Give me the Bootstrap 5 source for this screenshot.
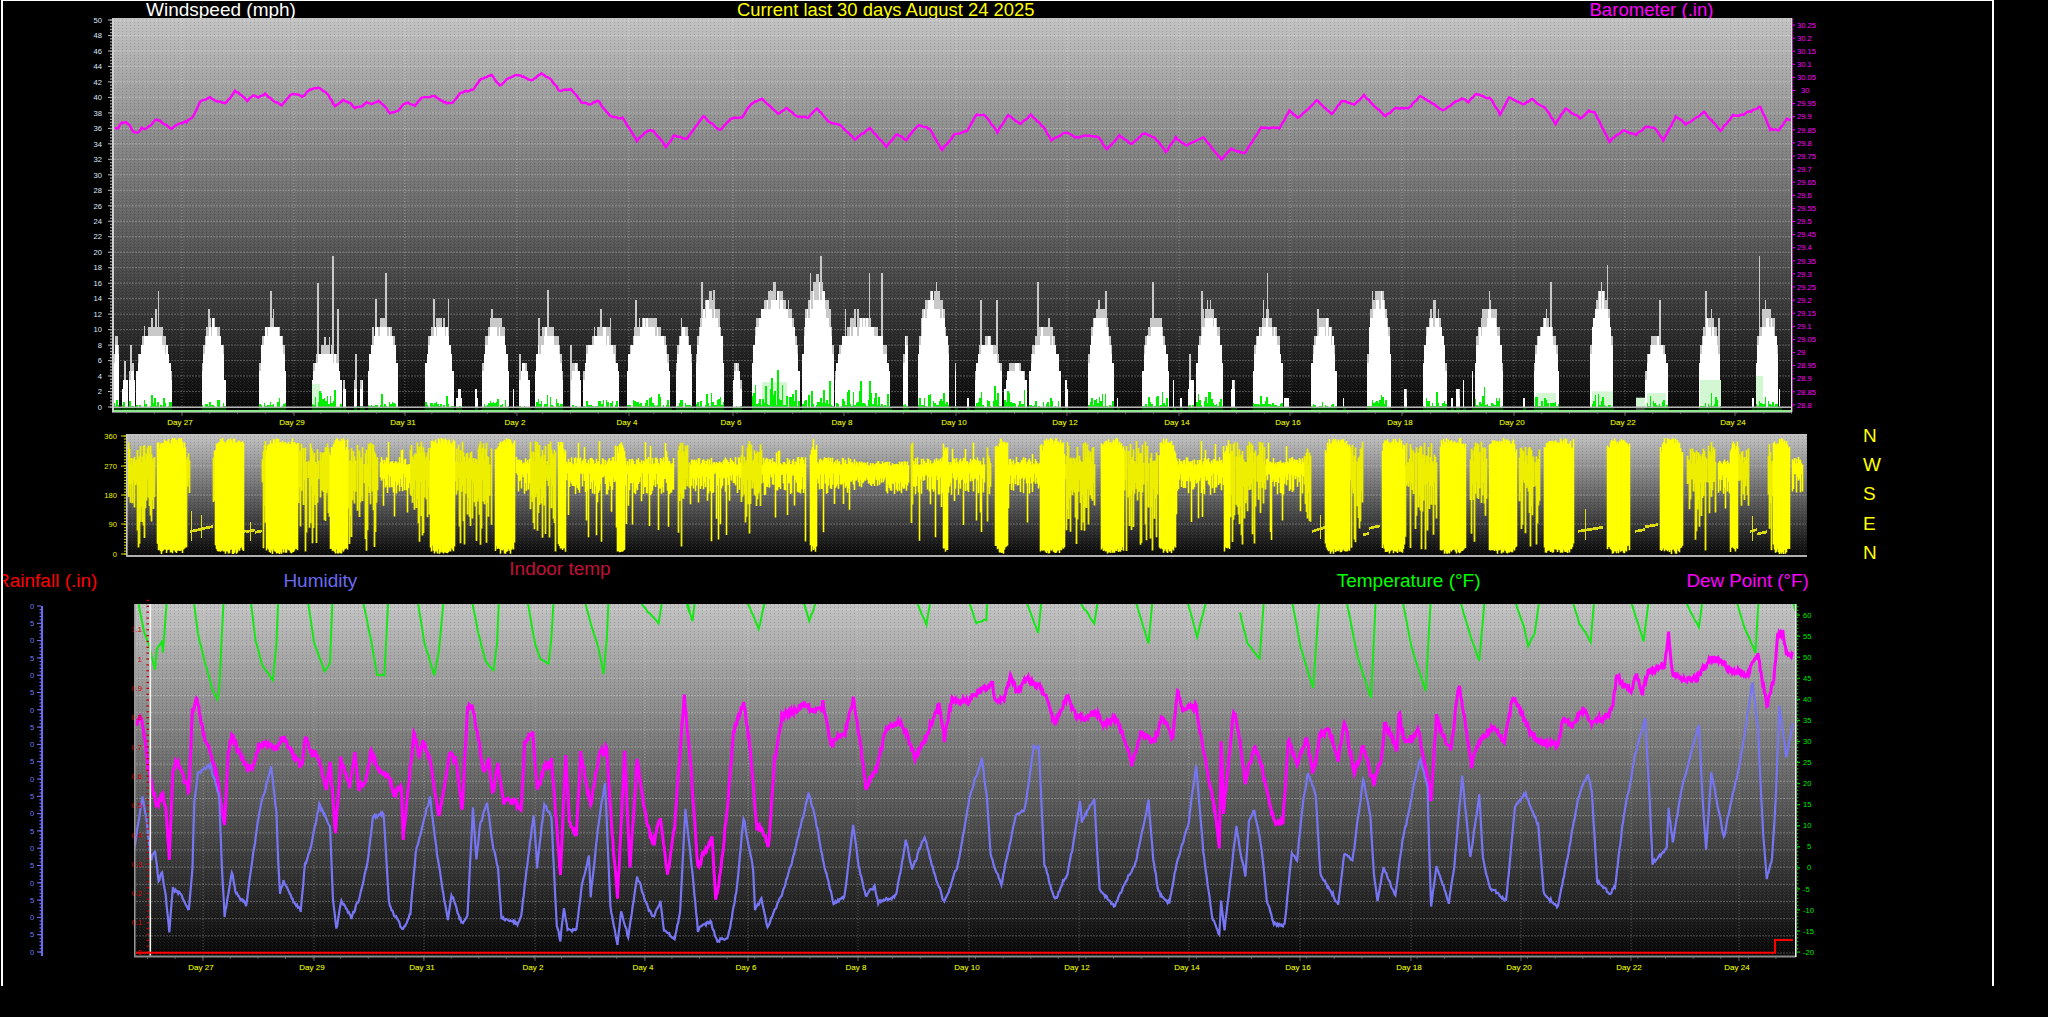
<!DOCTYPE html>
<html lang="en">
<head>
<meta charset="utf-8">
<title>Current last 30 days</title>
<link href="https://cdn.jsdelivr.net/npm/bootstrap@5.3.0/dist/css/bootstrap.min.css" rel="stylesheet">
<style>
html,body{background:#000;margin:0;overflow:hidden}
.wx-frame{margin-left:1px;width:1993px;height:986px;border:solid #fff;border-width:1px 2px 0 2px;font-family:"Liberation Sans",Arial,sans-serif}
.wx-frame svg{display:block;flex:none;overflow:visible;font-family:"Liberation Sans",Arial,sans-serif}
.wx-titles-top{height:17px;font-size:19px;line-height:17px}
.wx-titles-top span{white-space:nowrap}
.wx-titles-mid{height:47px;font-size:19px;line-height:22px}
.wx-titles-mid span{white-space:nowrap}
.wx-low{align-self:flex-end;margin-bottom:12px}
.t-wind{margin-left:143px;color:#fff}
.t-cur{margin-left:441px;color:#ffff00;font-size:18.4px}
.t-baro{margin-left:555px;color:#ff00ff;font-size:18.6px}
.t-rain{margin-left:-7px;color:#ff0000}
.t-hum{margin-left:186px;color:#6a6af0}
.t-ind{margin-left:152px;margin-top:1px;color:#c01038}
.t-temp{margin-left:726px;color:#00ff00}
.t-dew{margin-left:206px;color:#ff00ff;font-size:18.8px}
.wx-mid{height:127px}
.wx-compass{margin-top:-9px;margin-left:0;color:#ffff00;font-size:19px;line-height:29.2px}
.lb{font-size:7.6px}
.lb-w{fill:#dce8ff}
.lb-m{fill:#ff00ff}
.lb-y{fill:#f0f000}
.lb-g{fill:#00e800}
.lb-r{fill:#d80000}
.lb-b{fill:#7a7af5}
.lb-d{fill:#f6f600;stroke:#3a6a00;stroke-width:.25px;paint-order:stroke;font-size:8px}
</style>
</head>
<body class="bg-black">
<div class="wx-frame d-flex flex-column overflow-hidden bg-black">
  <div class="wx-titles-top d-flex">
    <span class="t-wind">Windspeed (mph)</span>
    <span class="t-cur">Current last 30 days August 24 2025</span>
    <span class="t-baro">Barometer (.in)</span>
  </div>
  <svg id="c1" width="1989" height="412" viewBox="3 18 1989 412"></svg>
  <div class="wx-mid d-flex align-items-start">
    <svg id="c2" width="1860" height="127" viewBox="3 430 1860 127"></svg>
    <div class="wx-compass d-flex flex-column">
      <span>N</span><span>W</span><span>S</span><span>E</span><span>N</span>
    </div>
  </div>
  <div class="wx-titles-mid d-flex overflow-hidden">
    <span class="t-rain wx-low">Rainfall (.in)</span>
    <span class="t-hum wx-low">Humidity</span>
    <span class="t-ind">Indoor temp</span>
    <span class="t-temp wx-low">Temperature (°F)</span>
    <span class="t-dew wx-low">Dew Point (°F)</span>
  </div>
  <svg id="c3" width="1989" height="381" viewBox="3 604 1989 381"></svg>
</div>
<script src="https://cdn.jsdelivr.net/npm/bootstrap@5.3.0/dist/js/bootstrap.bundle.min.js"></script>
<script>
function rng(a){return function(){a|=0;a=a+0x6D2B79F5|0;var t=Math.imul(a^a>>>15,1|a);t=t+Math.imul(t^t>>>7,61|t)^t;return((t^t>>>14)>>>0)/4294967296}}
var f1=function(v){return +v.toFixed(1)};
function defs(id){return '<linearGradient id="g'+id+'" x1="0" y1="0" x2="0" y2="1"><stop offset="0" stop-color="#c2c2c2"/><stop offset="1" stop-color="#060606"/></linearGradient>'}
var pat='<pattern id="dith" width="4" height="3" patternUnits="userSpaceOnUse"><rect x="0" y="0" width="1" height="1" fill="#fff" opacity=".08"/><rect x="2" y="1" width="1" height="1" fill="#000" opacity=".14"/><rect x="3" y="2" width="1" height="1" fill="#fff" opacity=".05"/></pattern>';
function text(x,y,s,cls,anchor){return '<text x="'+x+'" y="'+y+'" class="lb '+cls+'"'+(anchor?' text-anchor="'+anchor+'"':'')+'>'+s+'</text>'}
function hline(x0,x1,y,o){return '<line x1="'+x0+'" x2="'+x1+'" y1="'+y+'" y2="'+y+'" stroke="#fff" stroke-opacity="'+(o||.26)+'" stroke-dasharray="2 1"/>'}
function vline(x,y0,y1){return '<line x1="'+x+'" x2="'+x+'" y1="'+y0+'" y2="'+y1+'" stroke="#fff" stroke-opacity=".3" stroke-dasharray="1 2"/>'}
function trace(groups,amp,step,seed,wander){
  var pts=[],last=-1e9;
  groups.forEach(function(g){var fx=g[0],fy=g[1];for(var i=0;i<g[2].length;i+=2){var x=fx(g[2][i]),y=fy(g[2][i+1]);if(x>last){pts.push([x,y]);last=x}}});
  var r=rng(seed),d='',w=0;
  for(var k=0;k<pts.length-1;k++){var a=pts[k],b=pts[k+1],n=Math.max(1,Math.round((b[0]-a[0])/step));
    for(var j=0;j<n;j++){var t=j/n,x=a[0]+(b[0]-a[0])*t;w=w*.88+(r()-.5)*(wander||0);var y=a[1]+(b[1]-a[1])*t+(r()-.5)*2*amp+w;d+=(d?'L':'M')+f1(x)+' '+f1(y)}}
  return d;
}
var days=[27,29,31,2,4,6,8,10,12,14,16,18,20,22,24];
/* ---------- chart 1 ---------- */
(function(){
  var s='<defs>'+defs(1)+pat+'</defs>';
  s+='<rect x="112" y="18" width="1680" height="394" fill="url(#g1)"/><rect x="112" y="18" width="1680" height="394" fill="url(#dith)"/>';
  for(var i=0;i<=25;i++){var y=f1(407-i*15.48);s+=hline(114,1791,y);
    s+=text(102,f1(y+2.7),i*2,'lb-w','end');
    s+='<rect x="108" y="'+(y-.5)+'" width="4" height="1" fill="#bbb"/>';}
  for(i=0;i<=125;i++){s+='<rect x="110" y="'+f1(407-i*3.096-.5)+'" width="2" height="1.4" fill="#999"/>';}
  var grid=[182,294,405,517,629,733,844,956,1067,1179,1290,1402,1514,1625,1735];
  grid.forEach(function(x,i){s+=vline(x,18,412);s+=text(x-2,425,'Day '+days[i],'lb-d','middle');s+='<rect x="'+(x-.5)+'" y="412" width="1" height="4" fill="#666"/>'});
  for(i=0;i<61;i++)s+='<rect x="'+f1(126+i*27.75)+'" y="412" width="1" height="2" fill="#555"/>';
  /* barometer */
  var b1=[345,385,355,385,362,370,378,367,388,375,398,397,413,400,425,385,435,390,450,378,470,360,490,370,515,385,535,368,560,365,580,345,600,305,630,290,650,305,675,312,690,295,705,272,725,285,742,302,760,285,775,292,795,280,815,298,845,315,870,285,885,280,910,287,930,267,955,262,985,285,1005,320,1030,300,1050,308,1065,325,1085,320,1100,305,1115,312,1135,302,1150,315,1170,340,1195,330,1210,312,1225,308,1245,318,1265,292,1305,287,1340,310,1358,310,1380,280,1420,270,1440,243,1460,230,1475,223,1490,245];
  var b2=[0,108,8,90,20,72,30,80,38,90,50,68,60,85,72,125,85,118,98,155,108,163,118,150,132,198,148,205,165,270,178,242,185,242,200,290,210,258,225,268,245,198,265,242,280,205,292,205,302,165,316,145,335,190,346,172,358,200,372,203,382,172,396,215,410,225,428,268,446,232,466,288,478,255,490,272,505,225,518,235,533,298,548,252,563,245,575,195,585,198,600,248,613,196,627,222,640,195,655,230,665,272,682,247,695,262,705,255,722,262,732,300,747,258,762,282,776,250,790,265,803,305,815,265,828,288,848,263,870,328,882,295,898,312,918,232,940,232,952,182,962,205,985,152,1003,195,1016,152,1030,168,1042,138,1068,198,1080,172,1095,178,1110,135,1137,183,1160,145,1168,157,1177,132,1195,148,1206,195,1217,145,1235,165,1245,150,1262,178,1273,222,1285,178,1303,205,1313,183,1320,187,1338,275,1355,238,1370,255,1382,228,1392,232,1403,272,1418,203,1430,222,1445,200,1452,187,1472,240,1487,195,1500,192,1520,172,1532,238,1542,240,1552,208,1560,208];
  s+='<path fill="none" stroke="#ff00ff" stroke-width="2.4" d="'+trace([[function(v){return v/3},function(v){return v/3},b1],[function(v){return 500+v/1.206},function(v){return 50+v/3},b2]],.6,1.5,7,.8)+'"/>';
  /* wind humps: x0,x1,plateau,greenMax,spikes */
  var hs=[];
  var z3=[[340,360,9,1.5],[365,385,3.5,.8,[[375,6]]],[388,405,5.8,1,[[393,8]]],[408,515,10.5,1.2,[[433,10.5],[455,11.5],[475,15],[468,12.7]]],[605,675,11.5,1.2,[[627,12.7]]],[778,858,11.5,1.2,[[812,15]]],[935,1025,8,2.8,[[953,16],[998,19.5],[975,9],[988,9],[1013,12.7]]],[1030,1038,3.5,.2],[1062,1070,3.5,.2,[[1067,6.9]]],[1080,1090,3.5,.2],[1103,1195,11.5,1.6,[[1128,14],[1158,17.3],[1190,3.5]]],[1275,1360,11.5,1.6,[[1302,14],[1345,14]]],[1368,1385,2.3,.1],[1425,1432,2.3,.1]];
  z3.forEach(function(h){hs.push([h[0]/3,h[1]/3,h[2],h[3],(h[4]||[]).map(function(p){return [p[0]/3,p[1]]})])});
  var conv=function(o){return function(h){hs.push([o+h[0]/2.376,o+h[1]/2.376,(475-h[2])/23.2,h[3],(h[4]||[]).map(function(p){return [o+p[0]/2.376,(475-p[1])/23.2]})])}};
  [[5,68,205,1.2,[[28,180]]],[78,81,420,.1],[93,118,340,.2,[[95,315]]],[130,197,235,1.6,[[161,125],[140,207]]],[215,240,340,.4,[[216,290]]],[245,330,235,1.3,[[287,180],[310,207]]],[348,452,207,1.5,[[370,153]]],[465,505,235,1.2,[[478,207]]],[513,580,150,2.8,[[527,100],[555,125]]],[600,620,340,.2],[645,758,125,3.5,[[690,125]]],[765,840,100,3.6,[[810,22],[785,72]]],[843,975,207,2.7,[[925,72],[955,72],[868,180],[890,180]]],[1005,1017,262,.8],[1040,1115,125,2.2,[[1058,180]]],[1128,1133,340,.2],[1158,1162,445,.1],[1175,1240,262,2.4,[[1190,153],[1228,153]]],[1245,1300,340,2],[1305,1380,235,1.2,[[1325,100],[1352,207]]],[1390,1396,392,.1],[1445,1505,180,2.1,[[1470,153],[1487,127]]],[1513,1517,445,.1]].forEach(conv(480));
  [[5,68,207,1.8,[[30,100],[18,260]]],[78,82,392,.1],[95,99,445,.1],[113,128,390,.4,[[118,315]]],[133,197,180,2.3,[[147,127],[172,207]]],[215,226,392,.1],[268,340,207,2.9,[[303,72],[293,153]]],[343,354,445,.1],[407,467,207,.8,[[423,180]]],[482,487,445,.1],[540,597,127,1.2,[[552,127],[575,127]]],[628,634,420,.1],[672,728,180,1.8],[740,745,445,.1],[750,760,420,.1],[767,771,392,.1],[788,793,365,.1],[795,862,180,2.3,[[830,127],[845,180]]],[910,914,445,.1],[935,995,207,1.6,[[976,100]]],[1070,1125,127,1.5,[[1110,48]]],[1200,1255,262,1.2,[[1235,153],[1218,262]]],[1328,1380,207,2,[[1344,127],[1375,207]]],[1455,1460,445,.1],[1463,1518,180,1.6,[[1472,22],[1490,235],[1507,207]]],[1518,1522,420,.1]].forEach(conv(1140));
  var r=rng(11),white='',grey='',green='',V=7.74;
  var q=function(v){return Math.round(v/1.15)*1.15};
  hs.forEach(function(h){
    var w=h[1]-h[0];
    for(var x=h[0];x<h[1];x+=1.5){
      var t=(x-h[0]+.7)/w,e=Math.pow(Math.sin(Math.PI*Math.min(t,1)),.3);
      var g=q(h[2]*e*(.94+.12*r())),wh=q(h[2]*e*(.84+.14*r()));
      grey+='M'+f1(x)+' 407V'+f1(407-g*V)+'h1.5V407z';
      white+='M'+f1(x)+' 407V'+f1(407-wh*V)+'h1.5V407z';
      var gg=r()*r()*h[3]*e*1.5;
      green+='M'+f1(x)+' 410V'+f1(407-gg*V)+'h1.5V410z';
    }
    (h[4]||[]).forEach(function(p){grey+='M'+f1(p[0]-.7)+' 407V'+f1(407-p[1]*V)+'h1.6V407z'});
  });
  s+='<path d="'+grey+'" fill="#c9c9c9" shape-rendering="crispEdges"/><path d="'+white+'" fill="#fff" shape-rendering="crispEdges"/>';
  [[312,320,3],[762,787,3.2],[1536,1556,1.8],[1592,1613,2],[1647,1666,1.8],[1700,1721,3.5],[1756,1763,4],[1636,1645,1.2]].forEach(function(a){s+='<rect x="'+a[0]+'" width="'+(a[1]-a[0])+'" y="'+f1(407-a[2]*V)+'" height="'+f1(a[2]*V+4)+'" fill="#d2f7d2"/>'});
  s+='<path d="'+green+'" fill="#00ee00" shape-rendering="crispEdges"/>';
  s+='<rect x="114" y="406.5" width="1677" height="1.5" fill="#b4b4b4"/><rect x="114" y="408.3" width="1677" height="1.4" fill="#000"/><rect x="114" y="410" width="1677" height="2" fill="#8fe88f"/>';
  s+='<rect x="112" y="18" width="2" height="394" fill="#cfcfcf"/><rect x="1791" y="18" width="1.4" height="394" fill="#ddd"/><rect x="112" y="412" width="1680" height=".8" fill="#999"/>';
  for(i=0;i<30;i++){var l=30.25-i*.05,ly=f1(25+i*13.1);s+=text(i==5?1801:1797,f1(ly+2.7),+l.toFixed(2),'lb-m');s+='<rect x="1792" y="'+(ly-.5)+'" width="3" height="1" fill="#ff00ff"/>';}
  for(i=0;i<124;i++)s+='<rect x="1792" y="'+f1(19+i*3.17)+'" width="1.2" height="1.4" fill="#c000c0"/>';
  document.getElementById('c1').innerHTML=s;
})();
/* ---------- chart 2 ---------- */
(function(){
  var s='<defs>'+defs(2)+pat+'</defs>';
  s+='<rect x="126" y="434" width="1681" height="122" fill="url(#g2)"/><rect x="126" y="434" width="1681" height="122" fill="url(#dith)"/>';
  var lbs=[[360,436],[270,466],[180,495],[90,524],[0,554]];
  lbs.forEach(function(l){s+=text(117,l[1]+2.7,l[0],'lb-y','end');s+='<rect x="121" y="'+(l[1]-.5)+'" width="5" height="1" fill="#e0e000"/>';if(l[0]&&l[0]<360)s+=hline(128,1806,l[1]);});
  for(var i=0;i<=40;i++)s+='<rect x="124" y="'+f1(436+i*2.95-.5)+'" width="2" height="1.2" fill="#c0c000"/>';
  var segs=[[128,155,'M'],[157,186,'F'],[186,190,'M'],[190,213,'L'],[213,215,'M'],[215,244,'F'],[244,262,'L'],[262,266,'M'],[266,298,'F'],[298,310,'M'],[310,330,'M'],[330,348,'F'],[348,378,'M'],[380,410,'B'],[410,430,'M'],[430,455,'F'],[455,492,'M'],[495,515,'F'],[516,530,'B'],[530,556,'M'],[558,566,'F'],[566,617,'B'],[617,625,'F'],[625,674,'B'],[678,690,'M'],[690,741,'B'],[741,762,'M'],[762,806,'B'],[810,817,'F'],[817,855,'B'],[855,909,'C'],[911,913,'M'],[913,943,'B'],[943,948,'F'],[948,985,'B'],[987,991,'M'],[995,1008,'F'],[1008,1040,'B'],[1040,1065,'F'],[1065,1095,'M'],[1101,1124,'F'],[1124,1148,'M'],[1148,1158,'M'],[1159,1176,'F'],[1176,1224,'B'],[1224,1230,'F'],[1230,1266,'M'],[1266,1304,'B'],[1304,1312,'M'],[1312,1325,'L'],[1325,1350,'F'],[1350,1363,'M'],[1363,1380,'L'],[1382,1405,'F'],[1405,1437,'M'],[1440,1466,'F'],[1470,1487,'M'],[1489,1517,'F'],[1519,1540,'M'],[1544,1574,'F'],[1578,1603,'L'],[1607,1630,'F'],[1635,1658,'L'],[1660,1683,'F'],[1687,1716,'M'],[1718,1730,'B'],[1730,1738,'F'],[1738,1750,'M'],[1750,1767,'L'],[1768,1773,'M'],[1773,1790,'F'],[1792,1803,'B']];
  var r=rng(23),bright='',dim='',thin='';
  segs.forEach(function(g){
    var w=g[1]-g[0],step=0;
    for(var x=g[0];x<g[1];x++){
      var t,b,d=false,ty=g[2],p=r(),q=r();
      if(ty=='F'){var e=Math.min(1,Math.min(x-g[0]+1,g[1]-x)/5);t=438+r()*6+(1-e)*(18*r());b=549+r()*5-(1-e)*(10*r());}
      else if(ty=='B'){t=457+r()*8;b=473+r()*22;if(p<.1)b=500+q*42;else if(p<.14)t=441+q*15;}
      else if(ty=='C'){t=461+r()*5;b=476+r()*12;if(x>885)b=482+r()*12;}
      else if(ty=='M'){t=441+q*24;b=p<.6?478+r()*30:508+r()*44;d=true;if(p>.95)continue;}
      else{if(r()<.08)step=(r()-.5)*10;var base=531+step-(x-g[0])/w*4;t=base-1.2;b=base+1.6;if(p<.05){t=505+q*20;b=base+10;thin+='M'+(x+.5)+' '+f1(t)+'V'+f1(b);continue}thin+='M'+(x+.5)+' '+f1(t)+'V'+f1(b);continue}
      (d?dim+='M'+(x+.5)+' '+f1(t)+'V'+f1(b)
        :bright+='M'+(x+.5)+' '+f1(t)+'V'+f1(b));
    }
  });
  s+='<path d="'+thin+'" stroke="#dcdc10" stroke-width="1.2" fill="none" shape-rendering="crispEdges"/><path d="'+dim+'" stroke="#eeee00" stroke-width="1.8" fill="none"/><path d="'+bright+'" stroke="#ffff00" stroke-width="1.6" fill="none"/>';
  s+='<rect x="126" y="434" width="1.6" height="123" fill="#ccc"/><rect x="126" y="555" width="1681" height="2" fill="#b0b0b0"/>';
  document.getElementById('c2').innerHTML=s;
})();
/* ---------- chart 3 ---------- */
(function(){
  var s='<defs>'+defs(3)+pat+'<clipPath id="cp3"><rect x="135" y="604" width="1661" height="352"/></clipPath></defs>';
  s+='<rect x="134" y="604" width="1662" height="353" fill="url(#g3)"/><rect x="134" y="604" width="1662" height="353" fill="url(#dith)"/>';
  for(var i=0;i<=20;i++)s+=hline(136,1795,f1(953-i*17.17));
  [203,314,424,535,645,748,858,969,1079,1189,1300,1411,1521,1631,1739].forEach(function(x,k){s+=vline(x,604,957);s+=text(x-2,970,'Day '+days[k],'lb-d','middle');s+='<rect x="'+(x-.5)+'" y="957" width="1" height="4" fill="#666"/>'});
  for(i=0;i<60;i++)s+='<rect x="'+f1(147+i*27.6)+'" y="957" width="1" height="2" fill="#555"/>';
  var fy=function(v){return 600+v/3},fa=function(v){return 130+v/2.8},fb=function(v){return 680+v/2.8},fc=function(v){return 1240+v/2.8};
  /* temperature dips */
  var gd=[[fa,[[22,12,40,100,55,145,70,215,75,150,90,125,92,160,103,12],[178,12,190,100,210,190,230,270,245,305,250,270,262,12],[338,12,352,120,370,190,400,240,410,130,415,12],[498,12,515,130,535,190,545,215,560,190,567,12],[652,12,675,120,692,220,712,225,723,12],[805,12,825,130,852,218,865,150,878,12],[957,12,975,100,995,185,1018,215,1028,130,1033,12],[1113,12,1135,135,1150,180,1172,195,1180,120,1186,12],[1273,12,1290,70,1310,140,1326,222,1335,120,1340,12],[1425,12,1450,35,1480,70,1490,12],[1560,12,1568,40]]],
  [fb,[[15,12,35,60,42,12],[185,12,205,50,220,90,240,12],[345,12,362,62,383,12],[660,12,690,70,702,12],[808,12,830,70,858,60,860,12],[968,12,1003,95,1012,12],[1115,12,1160,70,1170,12],[1275,12,1312,128,1323,12],[1420,12,1448,110,1475,12]]],
  [fc,[[0,40,20,130,55,180,67,12],[145,12,170,140,205,270,222,12],[298,12,330,170,367,292,380,12],[455,12,480,140,520,275,534,12],[615,12,640,90,670,185,685,12],[770,12,795,80,807,135,825,100,838,12],[930,12,950,70,982,122,992,12],[1093,12,1130,122,1145,12],[1245,12,1285,85,1295,12],[1390,12,1415,90,1443,158,1452,12],[1548,12,1558,40]]]];
  var gp='';
  gd.forEach(function(c,idx){c[1].forEach(function(a,j){gp+=trace([[c[0],fy,a.map(function(v,n){return (n%2&&v==12)?0:v})]],.7,2,100+idx*20+j,1.2)+(function(){var l=a.length;return 'L'+f1(c[0](a[l-2]))+' '+f1(fy(a[l-1]==12?0:a[l-1]))})()})});
  /* dew point */
  var m9=[18,370,30,350,40,400,50,500,60,545,75,620,90,580,100,620,110,770,120,520,130,480,150,530,165,575,175,330,188,300,205,400,225,460,245,540,265,680,275,460,285,400,300,445,325,500,345,500,360,440,390,435,410,450,430,410,455,455,480,500,490,420,510,460,530,480,550,570,560,480,575,700,590,470,615,560,630,465,640,570,660,550,675,460,700,520,725,530,740,600,760,560,765,720,780,560,795,400,810,470,820,420,840,480,865,640,880,570,895,470,915,490,930,640,945,320,960,330,975,430,990,520,1005,480,1015,590,1030,500,1045,600,1085,610,1095,640,1105,430,1128,400,1140,570,1160,500,1180,480,1205,820,1220,460,1230,660,1250,700,1262,460,1290,620,1315,460,1335,450,1350,700,1365,890,1385,460,1400,800,1420,470,1440,630,1465,740,1485,650,1505,820,1525,680,1535,520,1552,285];
  var m10=[12,285,30,500,50,800,90,710,100,900,115,800,135,600,150,400,178,305,195,430,215,680,235,700,248,750,265,480,285,350,350,315,390,335,400,310,420,430,460,410,485,295,505,430,520,560,550,500,575,400,615,370,635,400,658,470,680,420,705,360,725,310,740,410,760,300,800,300,875,250,880,300,905,305,925,235,945,275,975,230,1020,280,1050,375,1085,285,1110,350,1175,335,1180,375,1225,360,1265,490,1290,400,1330,420,1350,350,1380,410,1393,270,1410,330,1445,320,1465,450,1500,640,1510,750,1515,420,1522,640,1550,330];
  var m11=[0,420,15,540,40,440,60,490,80,600,100,670,120,670,135,420,160,490,185,410,205,520,225,410,250,395,275,490,292,365,320,510,345,440,375,550,395,490,405,360,440,450,445,340,460,430,500,390,535,600,550,345,590,460,612,255,630,370,648,500,670,430,710,385,740,430,765,285,800,370,830,420,890,440,905,350,930,380,960,320,985,360,1040,340,1055,230,1095,280,1110,230,1125,285,1145,210,1190,200,1200,110,1210,215,1240,240,1280,240,1320,170,1370,215,1420,225,1450,160,1475,320,1495,250,1505,110,1520,100,1530,170,1550,155];
  var b9=[10,760,35,590,45,650,58,780,70,750,80,840,90,810,100,880,110,985,120,860,140,880,165,930,175,800,180,600,190,515,225,500,250,590,257,800,265,950,285,815,295,875,325,910,345,760,365,620,395,500,410,640,415,780,420,880,430,840,450,890,478,930,490,790,510,720,530,615,560,680,568,890,578,985,592,895,620,955,640,900,665,790,680,650,710,640,725,910,765,990,785,940,800,760,840,590,860,760,880,900,890,965,900,890,930,970,945,950,960,630,970,780,980,680,1000,610,1015,730,1030,800,1040,950,1085,975,1095,950,1115,770,1130,640,1140,800,1160,610,1180,650,1195,980,1205,1015,1215,920,1225,990,1250,990,1265,860,1285,770,1290,890,1310,690,1330,545,1345,920,1365,1030,1375,930,1395,1015,1420,830,1445,910,1465,950,1485,905,1495,990,1525,1015,1540,940,1555,630];
  var b10=[12,625,35,820,50,985,85,960,105,1025,135,1010,160,860,178,655,205,810,210,930,228,900,245,990,290,870,320,760,360,580,380,660,400,780,430,910,460,890,485,680,500,800,520,890,545,860,555,910,605,890,632,720,650,810,685,710,715,835,740,910,775,810,810,600,845,480,860,600,870,770,900,850,940,640,965,630,990,440,1005,440,1020,790,1050,900,1085,820,1100,740,1120,605,1125,670,1160,595,1175,870,1215,910,1245,850,1275,790,1312,605,1325,780,1340,880,1370,910,1390,790,1425,660,1445,490,1465,750,1490,950,1510,1005,1515,900,1525,985,1558,680];
  var b11=[0,750,15,820,25,660,40,630,60,740,75,900,95,970,125,975,145,760,160,780,175,620,190,520,212,580,225,820,240,850,275,910,292,760,315,780,345,540,365,650,375,820,385,900,402,800,435,890,455,720,470,650,490,540,505,480,525,560,530,750,535,920,550,800,585,910,600,800,622,530,645,770,670,590,680,770,700,860,745,905,770,620,800,580,835,680,850,880,890,920,905,840,945,600,975,520,985,570,1000,840,1035,880,1050,860,1075,650,1105,470,1135,355,1148,620,1155,790,1195,740,1200,625,1212,725,1240,550,1285,375,1295,600,1305,750,1320,520,1355,710,1395,510,1435,250,1450,380,1465,700,1475,830,1490,770,1500,600,1510,320,1530,470,1550,355];
  s+='<g clip-path="url(#cp3)">';
  s+='<path d="'+gp+'" fill="none" stroke="#16e816" stroke-width="2"/>';
  s+='<path d="'+trace([[fa,fy,m9],[fb,fy,m10],[fc,fy,m11]],3.2,.8,5,2.5)+'" fill="none" stroke="#ff00ff" stroke-width="3"/>';
  s+='<path d="'+trace([[fa,fy,b9],[fb,fy,b10],[fc,fy,b11]],1.5,.9,9,1.6)+'" fill="none" stroke="#7676f4" stroke-width="2.2"/>';
  s+='</g>';
  s+='<rect x="149.5" y="604" width="1.6" height="353" fill="#f4f4f4"/>';
  for(i=0;i<=60;i++)s+='<rect x="146.5" y="'+f1(952-i*5.86-.6)+'" width="2.4" height="1.3" fill="#c00000"/>';
  s+='<path d="M136 952.7H1775V940H1793" fill="none" stroke="#ff0000" stroke-width="2"/>';
  [0,.1,.2,.3,.4,.5,.6,.7,.8,.9,1,1.1].forEach(function(v,k){s+=text(142,f1(952-k*29.3+2.7),v,'lb-r','end')});
  s+='<rect x="134" y="604" width="1.5" height="353" fill="#999"/><rect x="134" y="955.5" width="1662" height="2" fill="#8a8a8a"/><rect x="1795" y="604" width="1.6" height="353" fill="#eee"/>';
  for(i=0;i<=16;i++){var v=60-i*5,y=f1(615+i*21.06);s+=text(v<0?1803:(v<10?1807:1803),f1(y+2.7),v,'lb-g');s+='<rect x="1797" y="'+(y-.5)+'" width="3" height="1.2" fill="#00d000"/>';}
  for(i=0;i<96;i++)s+='<rect x="1797" y="'+f1(606+i*3.6)+'" width="1.4" height="1.4" fill="#00b000"/>';
  /* humidity scale, cut off on the left */
  s+='<rect x="41" y="606" width="2" height="350" fill="#6a6af0"/>';
  for(i=0;i<=20;i++){var ly=f1(952-i*17.3);s+=text(30,f1(ly+2.7),i%2?'5':'0','lb-b');s+='<rect x="37" y="'+(ly-.5)+'" width="4" height="1" fill="#7a7af5"/>';}
  for(i=0;i<=99;i++)s+='<rect x="39.5" y="'+f1(952-i*3.46-.5)+'" width="1.5" height="1.2" fill="#6a6af0"/>';
  document.getElementById('c3').innerHTML=s;
})();
</script>
</body>
</html>
